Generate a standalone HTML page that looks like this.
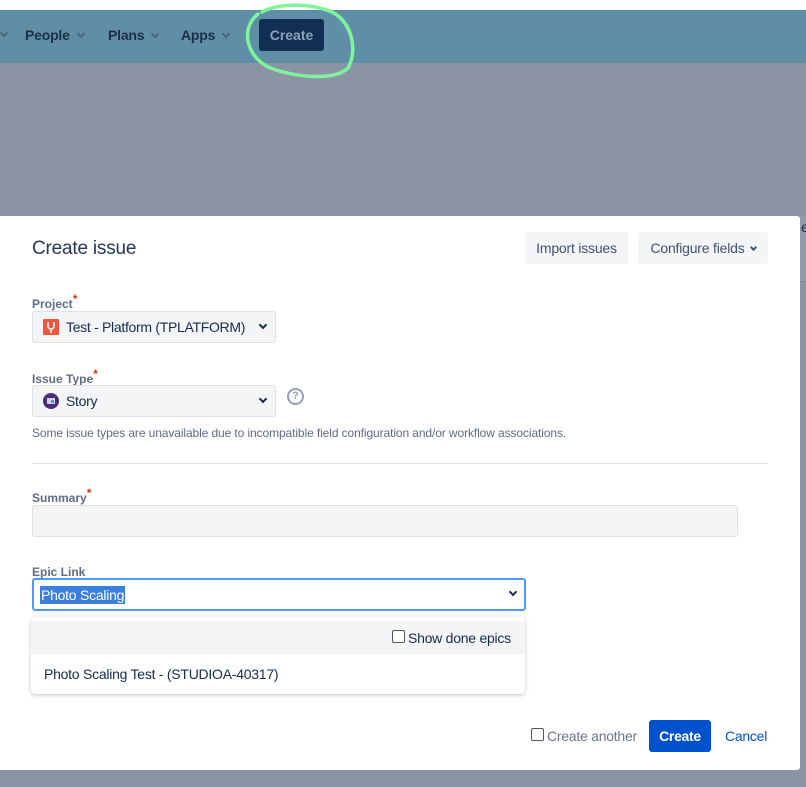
<!DOCTYPE html>
<html><head><meta charset="utf-8"><style>
*{box-sizing:border-box;margin:0;padding:0}
body{width:806px;height:787px;overflow:hidden;background:#8b94a5;font-family:"Liberation Sans",sans-serif;position:relative;color:#172b4d}
.a{position:absolute}
.top{left:0;top:0;width:806px;height:10px;background:#fff}
.nav{left:0;top:10px;width:806px;height:53px;background:#5f8ea7}
.nav span{position:absolute;top:17px;font-size:14px;font-weight:bold;color:#1e2f45;letter-spacing:-0.2px}
.chev{display:inline-block;width:6px;height:6px;border-right:2px solid currentColor;border-bottom:2px solid currentColor;transform:rotate(45deg);margin-left:8px;position:relative;top:-3px}
.cbtn{left:259px;top:19px;width:65px;height:32px;background:#112f53;border-radius:3px;color:#8fa1b6;font-size:14px;font-weight:bold;text-align:center;line-height:32px}
.dlg{left:0;top:216px;width:800px;height:554px;background:#fff;border-radius:0 3px 3px 0}
.lbl{font-size:12px;font-weight:bold;color:#5e6c84}
.lbl i{color:#de350b;font-style:normal;position:relative;top:-5px;font-size:12px}
.sel{background:#f4f5f7;border:1px solid #dfe1e6;border-radius:3px;font-size:14px;color:#172b4d;letter-spacing:-0.3px}
.dd{width:6px;height:6px;border-right:2px solid #172b4d;border-bottom:2px solid #172b4d;transform:rotate(45deg);position:absolute}
.btn{background:#f4f5f7;border-radius:3px;font-size:14px;color:#42526e;text-align:center;letter-spacing:-0.2px}
.t14{font-size:14px;letter-spacing:-0.25px}
</style></head><body>
<div class="a top"></div>
<div class="a nav">
<i class="chev" style="position:absolute;left:-7px;top:20px;color:#4a6479"></i>
<span style="left:25px">People<i class="chev" style="color:#4a6479"></i></span>
<span style="left:108px">Plans<i class="chev" style="color:#4a6479"></i></span>
<span style="left:181px">Apps<i class="chev" style="color:#4a6479"></i></span>
</div>
<div class="a cbtn">Create</div>
<svg class="a" style="left:236px;top:0" width="124" height="84"><path d="M22 14 C2 30 12 62 40 70 C65 78 100 80 112 68 C122 50 116 22 96 12 C72 2 40 4 26 12" fill="none" stroke="#7ef59a" stroke-width="3.5" stroke-linecap="round"/></svg>
<div class="a" style="left:800px;top:216px;width:6px;height:66px;background:#949cac;border-bottom:1px solid #7f8899"></div>
<div class="a" style="left:801px;top:219px;font-size:14px;color:#172b4d">e</div>
<div class="a dlg">
<div class="a" style="left:32px;top:22px;font-size:19px;color:#253858;letter-spacing:-0.2px">Create issue</div>
<div class="a btn" style="left:525px;top:16px;width:103px;height:32px;line-height:32px">Import issues</div>
<div class="a btn" style="left:638px;top:16px;width:130px;height:32px;line-height:32px">Configure fields<i class="chev" style="width:5px;height:5px;color:#42526e;margin-left:6px"></i></div>

<div class="a lbl" style="left:32px;top:81px">Project<i>*</i></div>
<div class="a sel" style="left:32px;top:95px;width:244px;height:32px">
<svg class="a" style="left:10px;top:7px" width="16" height="16"><rect width="16" height="16" rx="1" fill="#f4553a"/><path d="M5 3 v4 a3 3 0 0 0 6 0 v-4 M8 9 v5" stroke="#ddd" stroke-width="2" fill="none"/></svg>
<span class="a" style="left:33px;top:7px">Test - Platform (TPLATFORM)</span>
<div class="dd" style="left:227px;top:10px"></div></div>

<div class="a lbl" style="left:32px;top:156px">Issue Type<i>*</i></div>
<div class="a sel" style="left:32px;top:169px;width:244px;height:32px">
<svg class="a" style="left:10px;top:7px" width="16" height="16"><circle cx="8" cy="8" r="8" fill="#4a2c7a"/><rect x="4" y="5" width="8" height="6" fill="#d5d0e8"/><rect x="8" y="7" width="3" height="3" fill="#3fa3e0"/></svg>
<span class="a" style="left:33px;top:7px">Story</span>
<div class="dd" style="left:227px;top:10px"></div></div>
<div class="a" style="left:287px;top:172px;width:17px;height:17px;border:2px solid #97a0af;border-radius:50%;color:#97a0af;font-size:11px;font-weight:bold;text-align:center;line-height:13px">?</div>
<div class="a" style="left:32px;top:210px;font-size:12px;color:#5e6c84;letter-spacing:-0.1px">Some issue types are unavailable due to incompatible field configuration and/or workflow associations.</div>
<div class="a" style="left:32px;top:247px;width:736px;height:1px;background:#dfe1e6"></div>

<div class="a lbl" style="left:32px;top:275px">Summary<i>*</i></div>
<div class="a sel" style="left:32px;top:289px;width:706px;height:32px"></div>

<div class="a lbl" style="left:32px;top:349px">Epic Link</div>
<div class="a" style="left:32px;top:362px;width:494px;height:33px;border:2px solid #4c9aff;border-radius:3px;background:#fff">
<span class="a t14" style="left:6px;top:6px;background:#3a7ee0;color:#fff;padding:1px 1px">Photo Scaling</span>
<div class="dd" style="left:476px;top:9px"></div></div>
<div class="a" style="left:31px;top:617px;width:494px;height:77px;background:#fff;border-radius:4px;box-shadow:0 1px 4px rgba(9,30,66,.25);position:fixed">
<div class="a" style="left:0;top:4px;width:494px;height:33px;background:#f4f5f7"></div>
<div class="a" style="left:361px;top:13px;width:13px;height:13px;border:1px solid #555;border-radius:2px;background:#fff"></div>
<div class="a t14" style="left:377px;top:13px;color:#172b4d">Show done epics</div>
<div class="a t14" style="left:13px;top:49px;color:#172b4d">Photo Scaling Test - (STUDIOA-40317)</div>
</div>

<div class="a" style="left:531px;top:512px;width:13px;height:13px;border:1px solid #555;border-radius:2px"></div>
<div class="a t14" style="left:547px;top:512px;color:#6b778c">Create another</div>
<div class="a" style="left:649px;top:504px;width:62px;height:32px;background:#0052cc;border-radius:3px;color:#fff;font-weight:bold;font-size:14px;text-align:center;line-height:32px;letter-spacing:-0.3px">Create</div>
<div class="a t14" style="left:725px;top:512px;color:#0052cc">Cancel</div>
</div>
</body></html>
